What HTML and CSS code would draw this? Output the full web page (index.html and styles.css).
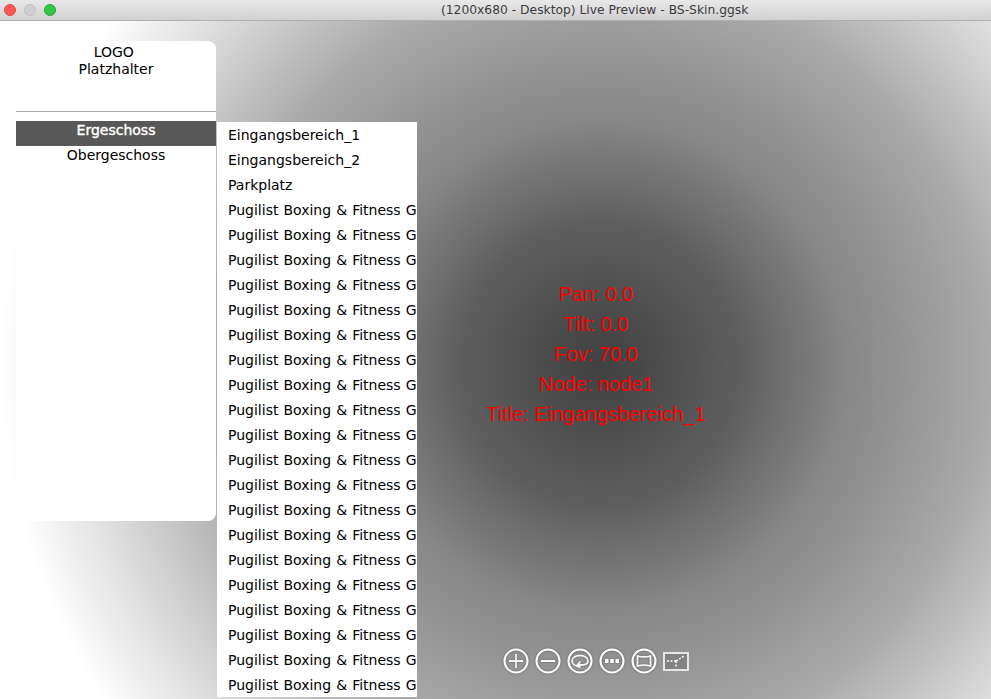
FILE: index.html
```html
<!DOCTYPE html>
<html lang="en">
<head>
  <meta charset="UTF-8">
  <title>Live Preview - BS-Skin.ggsk</title>
  <link rel="stylesheet" href="styles.css">
</head>
<body>
  <!-- Window title bar -->
  <div class="titlebar">
    <div class="lights">
      <span class="light light-close"></span>
      <span class="light light-min"></span>
      <span class="light light-max"></span>
    </div>
    <div class="window-title">(1200x680 - Desktop) Live Preview - BS-Skin.ggsk</div>
  </div>

  <div class="stage">
    <!-- Left menu -->
    <div class="panel">
      <div class="logo">LOGO&nbsp;<br>Platzhalter</div>
      <div class="floor floor-active">Ergeschoss</div>
      <div class="floor">Obergeschoss</div>
    </div>

    <!-- Node list -->
    <div class="nodes">
      <div class="node">Eingangsbereich_1</div>
      <div class="node">Eingangsbereich_2</div>
      <div class="node">Parkplatz</div>
      <div class="node">Pugilist Boxing &amp; Fitness Gym</div>
      <div class="node">Pugilist Boxing &amp; Fitness Gym</div>
      <div class="node">Pugilist Boxing &amp; Fitness Gym</div>
      <div class="node">Pugilist Boxing &amp; Fitness Gym</div>
      <div class="node">Pugilist Boxing &amp; Fitness Gym</div>
      <div class="node">Pugilist Boxing &amp; Fitness Gym</div>
      <div class="node">Pugilist Boxing &amp; Fitness Gym</div>
      <div class="node">Pugilist Boxing &amp; Fitness Gym</div>
      <div class="node">Pugilist Boxing &amp; Fitness Gym</div>
      <div class="node">Pugilist Boxing &amp; Fitness Gym</div>
      <div class="node">Pugilist Boxing &amp; Fitness Gym</div>
      <div class="node">Pugilist Boxing &amp; Fitness Gym</div>
      <div class="node">Pugilist Boxing &amp; Fitness Gym</div>
      <div class="node">Pugilist Boxing &amp; Fitness Gym</div>
      <div class="node">Pugilist Boxing &amp; Fitness Gym</div>
      <div class="node">Pugilist Boxing &amp; Fitness Gym</div>
      <div class="node">Pugilist Boxing &amp; Fitness Gym</div>
      <div class="node">Pugilist Boxing &amp; Fitness Gym</div>
      <div class="node">Pugilist Boxing &amp; Fitness Gym</div>
      <div class="node">Pugilist Boxing &amp; Fitness Gym</div>
    </div>

    <!-- Debug text over the panorama -->
    <div class="debug">
      <div>Pan: 0.0</div>
      <div>Tilt: 0.0</div>
      <div>Fov: 70.0</div>
      <div>Node: node1</div>
      <div>Title: Eingangsbereich_1</div>
    </div>

    <!-- Player controls -->
    <div class="controls">
      <svg class="icon" viewBox="0 0 26 26"><circle cx="13" cy="13" r="11.5"/><path class="thin" d="M13 6v14M6 13h14"/></svg>
      <svg class="icon" viewBox="0 0 26 26"><circle cx="13" cy="13" r="11.5"/><path d="M6 13h14"/></svg>
      <svg class="icon" viewBox="0 0 26 26"><circle cx="13" cy="13" r="11.5"/><path class="thin" d="M11.500 18.500c-3.500-.5-6.500-2.700-6.500-5.500 0-3.500 3.500-5.500 8-5.500s8 2 8 5.500c0 2.700-3 4-6.500 4h-3.500M13.500 13.500l-3 3.300 3 3.200"/></svg>
      <svg class="icon" viewBox="0 0 26 26"><circle cx="13" cy="13" r="11.500"/><path class="dots" d="M6 11h3.500v4H6zM11.250 11h3.500v4h-3.500zM16.500 11H20v4h-3.500z"/></svg>
      <svg class="icon" viewBox="0 0 26 26"><circle cx="13" cy="13" r="11.500"/><path class="thin" d="M6.500 8c4.300 1.200 8.700 1.200 13 0v10c-4.300-1.200-8.700-1.200-13 0z"/></svg>
      <svg class="icon-map" viewBox="0 0 26 19"><rect x="1" y="1" width="24" height="17"/><path class="map-line" d="M4 9h9M13 9v6M13 9l8-5"/></svg>
    </div>
  </div>
</body>
</html>
```

FILE: styles.css
```css
/* General page styles */
html, body {
  margin: 0;
  height: 100%;
  overflow: hidden;
}

body {
  display: flex;
  flex-direction: column;
  font-family: "DejaVu Sans", sans-serif;
  background-color: #fff;
}

/* Title bar */
.titlebar {
  display: flex;
  align-items: center;
  height: 20px;
  flex-shrink: 0;
  background: linear-gradient(#e9e8e9, #d2d1d2);
  border-bottom: 1px solid #b1b0b1;
}

.lights {
  display: flex;
  gap: 8px;
  padding-left: 4px;
}

.light {
  width: 12px;
  height: 12px;
  border-radius: 50%;
  box-sizing: border-box;
}

.light-close { background-color: #fc5753; border: 1px solid #df4744; }
.light-min { background-color: #cfcfcf; border: 1px solid #c0bfc0; }
.light-max { background-color: #33c748; border: 1px solid #27aa35; }

.window-title {
  margin-left: 385px;
  white-space: nowrap;
  font-size: 12.3px;
  color: #3c3c3c;
}

/* Panorama area */
.stage {
  flex: 1;
  position: relative;
  display: flex;
  align-items: flex-start;
  padding: 20px 0 0 16px;
  background: radial-gradient(circle 610px at 600px 344px, #404040 0, #5e5e5e 140px, #868686 243px, #9d9d9d 340px, #ababab 391px, #dedede 515px, #fff 600px);
  overflow: hidden;
}

/* Left menu */
.panel {
  width: 200px;
  height: 480px;
  background-color: #fff;
  border-radius: 0 8px 8px 0;
  font-size: 14px;
  color: #000;
  text-align: center;
}

.logo {
  height: 67px;
  padding-top: 3px;
  line-height: 17px;
  border-bottom: 1px solid #aaa;
  margin-bottom: 9px;
}

.floor {
  height: 25px;
  line-height: 18px;
}

.floor-active {
  background-color: #585858;
  color: #fff;
  -webkit-text-stroke: 0.4px #fff;
}

/* Node list */
.nodes {
  width: 200px;
  height: 575px;
  margin: 81px 0 0 1px;
  background-color: #fff;
  overflow: hidden;
  font-size: 14px;
  color: #000;
}

.node {
  height: 25px;
  line-height: 27px;
  padding-left: 11px;
  white-space: nowrap;
  word-spacing: 0.6px;
}

/* Debug text */
.debug {
  position: absolute;
  left: 346px;
  top: 258px;
  width: 500px;
  text-align: center;
  font-family: "Liberation Sans", sans-serif;
  font-size: 20px;
  line-height: 30px;
  color: #f00;
}

/* Player controls */
.controls {
  position: absolute;
  left: 503px;
  top: 627px;
  display: flex;
  align-items: center;
  gap: 6px;
}

.icon {
  width: 26px;
  height: 26px;
  fill: none;
  stroke: #fff;
  stroke-width: 2;
  filter: drop-shadow(0 0 1px #666);
}

.icon .thin {
  stroke: #f4f4f4;
  stroke-width: 1.800;
}

.icon .dots {
  fill: #fff;
  stroke: none;
}

.icon-map {
  width: 26px;
  height: 19px;
  fill: rgba(0, 0, 0, 0.12);
  stroke: #e6e6e6;
  stroke-width: 2;
}

.map-line {
  fill: none;
  stroke: #fff;
  stroke-width: 1.500;
  stroke-dasharray: 2 1.500;
}
```
